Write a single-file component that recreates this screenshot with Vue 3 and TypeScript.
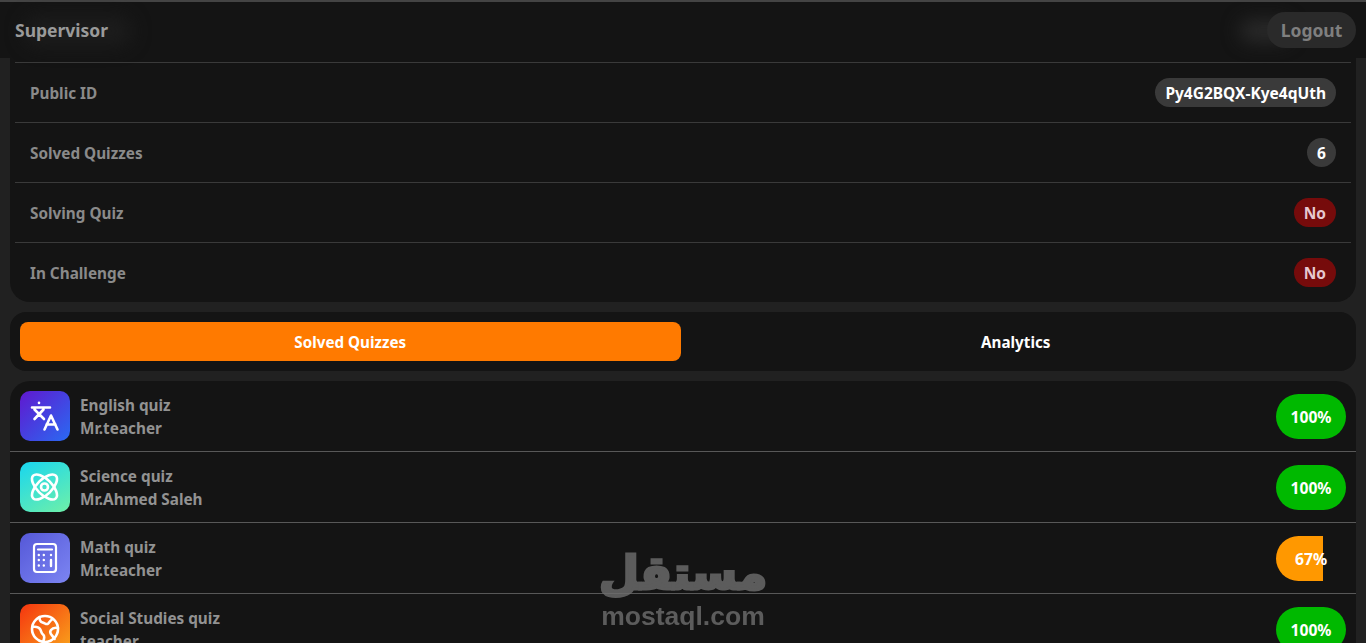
<script setup lang="ts">
interface Info { label: string; value: string; kind: string }
interface Quiz { title: string; teacher: string; score: number; icon: string; grad: string }

const infos: Info[] = [
  { label: 'Public ID', value: 'Py4G2BQX-Kye4qUth', kind: 'neutral' },
  { label: 'Solved Quizzes', value: '6', kind: 'neutral' },
  { label: 'Solving Quiz', value: 'No', kind: 'danger' },
  { label: 'In Challenge', value: 'No', kind: 'danger' },
]
const quizzes: Quiz[] = [
  { title: 'English quiz', teacher: 'Mr.teacher', score: 100, icon: 'lang', grad: 'g1' },
  { title: 'Science quiz', teacher: 'Mr.Ahmed Saleh', score: 100, icon: 'atom', grad: 'g2' },
  { title: 'Math quiz', teacher: 'Mr.teacher', score: 67, icon: 'calc', grad: 'g3' },
  { title: 'Social Studies quiz', teacher: 'teacher', score: 100, icon: 'globe', grad: 'g4' },
]
</script>

<template>
  <div class="page">
    <header class="topbar">
      <div class="blob blob-left"></div>
      <span class="role">Supervisor</span>
      <div class="blob blob-right"></div>
      <button class="logout">Logout</button>
    </header>

    <main class="content">
      <section class="card info">
        <div v-for="i in infos" :key="i.label" class="info-row">
          <span class="info-label">{{ i.label }}</span>
          <span class="chip" :class="i.kind">{{ i.value }}</span>
        </div>
      </section>

      <nav class="card tabs">
        <button class="tab active">Solved Quizzes</button>
        <button class="tab">Analytics</button>
      </nav>

      <section class="card list">
        <div v-for="q in quizzes" :key="q.title" class="quiz">
          <div class="thumb" :class="q.grad">
            <svg v-if="q.icon === 'lang'" viewBox="0 0 50 50" class="ic" fill="none" stroke="#fff" stroke-width="2.6" stroke-linecap="round" stroke-linejoin="round">
              <path d="M12 16.500h18M19 11.800v.2M14.500 28l9-9.500M14.500 18.500l9.500 9.500M24.500 38.500l6.500-14 6.500 14M26.500 33.500h9"/>
            </svg>
            <svg v-else-if="q.icon === 'atom'" viewBox="0 0 50 50" class="ic" fill="none" stroke="#fff" stroke-width="2.6" stroke-linecap="round" stroke-linejoin="round">
              <ellipse cx="24.500" cy="25" rx="7.500" ry="16" transform="rotate(45 24.500 25)"/>
              <ellipse cx="24.500" cy="25" rx="7.500" ry="16" transform="rotate(-45 24.500 25)"/>
              <circle cx="24.500" cy="25" r="3.500"/>
            </svg>
            <svg v-else-if="q.icon === 'calc'" viewBox="0 0 50 50" class="ic" fill="none" stroke="#fff" stroke-width="2.200" stroke-linecap="round" stroke-linejoin="round">
              <rect x="14" y="11" width="22" height="28" rx="3"/>
              <path d="M18 16.500h14"/>
              <path stroke-width="2.400" d="M18.800 22h.01M23.800 22h.01M18.800 27h.01M23.800 27h.01M18.800 32.500h.01M23.800 32.500h.01M31 22h.01M31 27v6"/>
            </svg>
            <svg v-else viewBox="0 0 50 50" class="ic" fill="none" stroke="#fff" stroke-width="2.600" stroke-linecap="round" stroke-linejoin="round">
              <circle cx="25" cy="25" r="13"/>
              <path d="M19.500 13c0 3 1 5 3 5.500 2 .5 3.500 2 5 1.500s2-3 4.500-4.500M38 24c-3-.5-5.500 0-7 2s-.5 4 1 5.500 2 2.500 2.500 3.500M12.500 23c3-.5 6 0 7.500 2s1 4 3 5.500c2 1.500 1.500 4 0 7.500"/>
            </svg>
          </div>
          <div class="quiz-text">
            <div class="quiz-title">{{ q.title }}</div>
            <div class="quiz-teacher">{{ q.teacher }}</div>
          </div>
          <div class="score">
            <div class="fill" :class="{ warn: q.score < 100 }" :style="{ width: q.score + '%' }"></div>
            <span class="score-text">{{ q.score }}%</span>
          </div>
        </div>
      </section>
    </main>

    <div class="mark">
      <span class="mark-ar" dir="rtl" lang="ar">مستقل</span>
      <span class="mark-en">mostaql.com</span>
    </div>
  </div>
</template>

<style>
html, body { margin: 0; background: #212121; overflow: hidden; }
</style>

<style scoped>
.page {
  position: relative;
  width: 1366px;
  height: 643px;
  overflow: hidden;
  background: #212121;
  font-family: "Noto Sans", "DejaVu Sans", sans-serif;
  font-weight: 700;
}
.topbar {
  box-sizing: border-box;
  height: 58px;
  border-top: 2px solid #444;
  background: #141414;
  display: flex;
  align-items: center;
  padding: 0 10px 0 15px;
  position: relative;
}
.role { position: relative; font-size: 17.500px; color: #9a9a9a; }
.blob { position: absolute; border-radius: 20px; filter: blur(9px); background: #1c1c1c; }
.blob-left { left: 24px; top: 14px; width: 108px; height: 30px; }
.blob-right { left: 1240px; top: 18px; width: 50px; height: 22px; background: #2a2a2a; }
.logout {
  position: relative;
  margin-left: auto;
  width: 89px;
  height: 36px;
  border: 0;
  border-radius: 18px;
  background: #2a2a2a;
  color: #7f7f7f;
  font: inherit;
  font-size: 17.500px;
}
.content {
  display: flex;
  flex-direction: column;
  padding: 0 10px;
  gap: 10px;
}
.card { background: #141414; border-radius: 16px; }
.info {
  box-sizing: border-box;
  height: 244px;
  padding: 4px 5px 0;
  border-radius: 0 0 20px 20px;
}
.info-row {
  box-sizing: border-box;
  height: 60px;
  border-top: 1px solid #3a3a3a;
  padding: 0 15px;
  display: flex;
  align-items: center;
  justify-content: space-between;
}
.info-label { font-size: 15.300px; color: #8a8a8a; }
.chip {
  box-sizing: border-box;
  min-width: 29px;
  height: 29px;
  padding: 0 10px;
  border-radius: 15px;
  display: flex;
  align-items: center;
  justify-content: center;
  font-size: 15.500px;
  color: #fff;
}
.neutral { background: #3a3a3a; }
.danger { background: #760b0b; color: #e6c8d0; }
.tabs {
  box-sizing: border-box;
  height: 59px;
  padding: 10px;
  display: flex;
  gap: 5px;
  align-items: flex-start;
}
.tab {
  flex: 1;
  height: 39px;
  border: 0;
  background: transparent;
  border-radius: 8px;
  color: #fff;
  font: inherit;
  font-size: 15.200px;
}
.tab.active { background: #ff7a00; }
.list { border-radius: 20px 20px 0 0; }
.quiz {
  box-sizing: border-box;
  height: 71px;
  padding: 10px;
  border-bottom: 1px solid #585858;
  display: flex;
  align-items: center;
  gap: 10px;
}
.thumb {
  width: 50px;
  height: 50px;
  flex: none;
  border-radius: 10px;
}
.ic { display: block; width: 50px; height: 50px; }
.g1 { background: linear-gradient(135deg, #6018cf, #2a6af2); }
.g2 { background: linear-gradient(150deg, #18d6f0, #6ff0a8); }
.g3 { background: linear-gradient(135deg, #5558d8, #7c85f2); }
.g4 { background: linear-gradient(135deg, #f5350f, #f9a71c); }
.quiz-text { display: flex; flex-direction: column; gap: 4px; padding-top: 2px; font-size: 15.300px; line-height: 19px; color: #929292; }
.score {
  position: relative;
  margin-left: auto;
  width: 70px;
  height: 45px;
  border-radius: 23px;
  overflow: hidden;
  display: flex;
  align-items: center;
  justify-content: center;
}
.fill { position: absolute; left: 0; top: 0; bottom: 0; background: #00b900; }
.fill.warn { background: #ff9800; }
.score-text { position: relative; top: 1px; color: #fff; font-size: 15.700px; }
.mark {
  position: absolute;
  left: 583px;
  top: 546px;
  width: 200px;
  display: flex;
  flex-direction: column;
  align-items: center;
  color: #6e6e6e;
  opacity: .8;
  pointer-events: none;
}
.mark-ar { font-family: "DejaVu Sans", sans-serif; font-size: 46px; line-height: 55px; font-weight: 700; -webkit-text-stroke: 3px #6e6e6e; }
.mark-en { font-family: "Liberation Sans", sans-serif; font-size: 26.500px; line-height: 30px; font-weight: 700; }
</style>
